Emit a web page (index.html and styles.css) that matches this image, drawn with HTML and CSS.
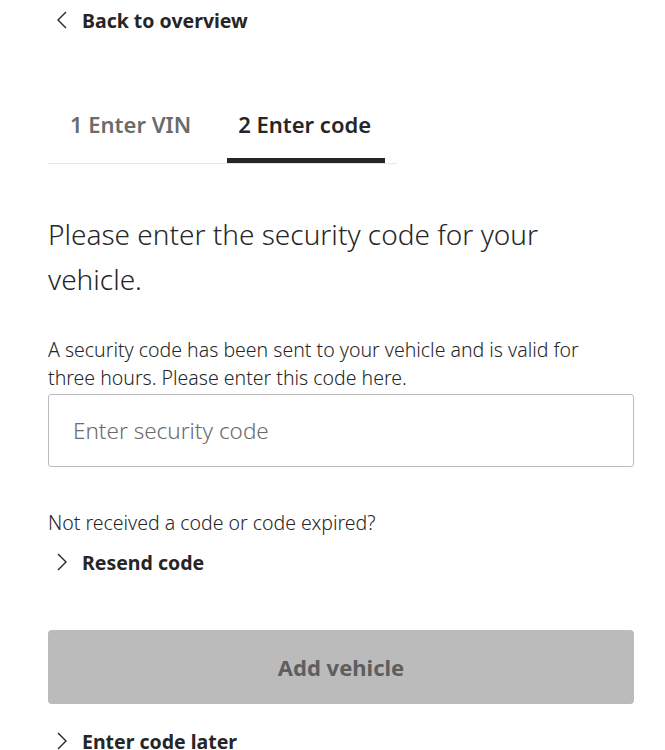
FILE: index.html
```html
<!DOCTYPE html>
<html lang="en">
<head>
<meta charset="utf-8">
<link rel="stylesheet" href="styles.css">
</head>
<body>
<main class="page">
  <a class="link back" href="#">
    <svg class="chev" viewBox="0 0 12 18" width="12" height="18"><path d="M10 1 L2 9 L10 17" fill="none" stroke="#262626" stroke-width="1.4"/></svg>
    <span>Back to overview</span>
  </a>

  <nav class="tabs">
    <div class="tab">1 Enter VIN</div>
    <div class="tab active">2 Enter code</div>
  </nav>

  <h1 class="title">Please enter the security code for your vehicle.</h1>

  <p class="info">A security code has been sent to your vehicle and is valid for three hours. Please enter this code here.</p>

  <input class="code" type="text" placeholder="Enter security code">

  <p class="question">Not received a code or code expired?</p>
  <a class="link resend" href="#">
    <svg class="chev" viewBox="0 0 12 18" width="12" height="18"><path d="M2 1 L10 9 L2 17" fill="none" stroke="#262626" stroke-width="1.4"/></svg>
    <span>Resend code</span>
  </a>

  <button class="submit" type="button" disabled>Add vehicle</button>

  <a class="link later" href="#">
    <svg class="chev" viewBox="0 0 12 18" width="12" height="18"><path d="M2 1 L10 9 L2 17" fill="none" stroke="#262626" stroke-width="1.4"/></svg>
    <span>Enter code later</span>
  </a>
</main>
</body>
</html>
```

FILE: styles.css
```css
html, body {
  margin: 0;
  padding: 0;
  background: #fff;
}
body {
  font-family: "Noto Sans", "Open Sans", sans-serif;
  color: #262626;
}
.page {
  padding: 0 31px 0 48px;
  display: flex;
  flex-direction: column;
  align-items: flex-start;
}
.link {
  display: flex;
  align-items: center;
  gap: 14px;
  color: #262626;
  text-decoration: none;
  font-weight: 700;
  font-size: 19.5px;
  padding-left: 8px;
  height: 24px;
}
.back {
  margin-top: 8px;
}
.tabs {
  margin-top: 63px;
  width: 349px;
  display: flex;
  border-bottom: 1px solid #e6e6e6;
}
.tab {
  font-size: 22px;
  font-weight: 600;
  line-height: 30px;
  color: #6b6b6b;
  padding: 14px 22px 19px 22px;
  border-bottom: 5px solid transparent;
}
.tab.active {
  color: #262626;
  margin-left: 14px;
  padding-left: 11px;
  padding-right: 14px;
  border-bottom-color: #262626;
}
.title {
  margin: 48px 0 0 0;
  font-size: 28px;
  font-weight: 300;
  line-height: 45px;
  max-width: 540px;
}
.info {
  margin: 34px 0 0 0;
  font-size: 19.5px;
  font-weight: 300;
  line-height: 28px;
  max-width: 580px;
}
.code {
  margin-top: 2px;
  width: 586px;
  height: 73px;
  box-sizing: border-box;
  border: 1px solid #bbbbbb;
  border-radius: 3px;
  padding: 0 24px;
  font-family: inherit;
  font-size: 22.5px;
  font-weight: 300;
  color: #262626;
}
.code::placeholder {
  color: #6b6b6b;
}
.question {
  margin: 42px 0 0 0;
  font-size: 19.5px;
  font-weight: 300;
  line-height: 27px;
}
.resend {
  margin-top: 14px;
}
.submit {
  margin-top: 56px;
  width: 586px;
  height: 74px;
  border: 0;
  border-radius: 4px;
  background: #bbbbbb;
  color: #5e5e5e;
  font-family: inherit;
  font-size: 22px;
  font-weight: 700;
}
.later {
  margin-top: 25px;
}
```
